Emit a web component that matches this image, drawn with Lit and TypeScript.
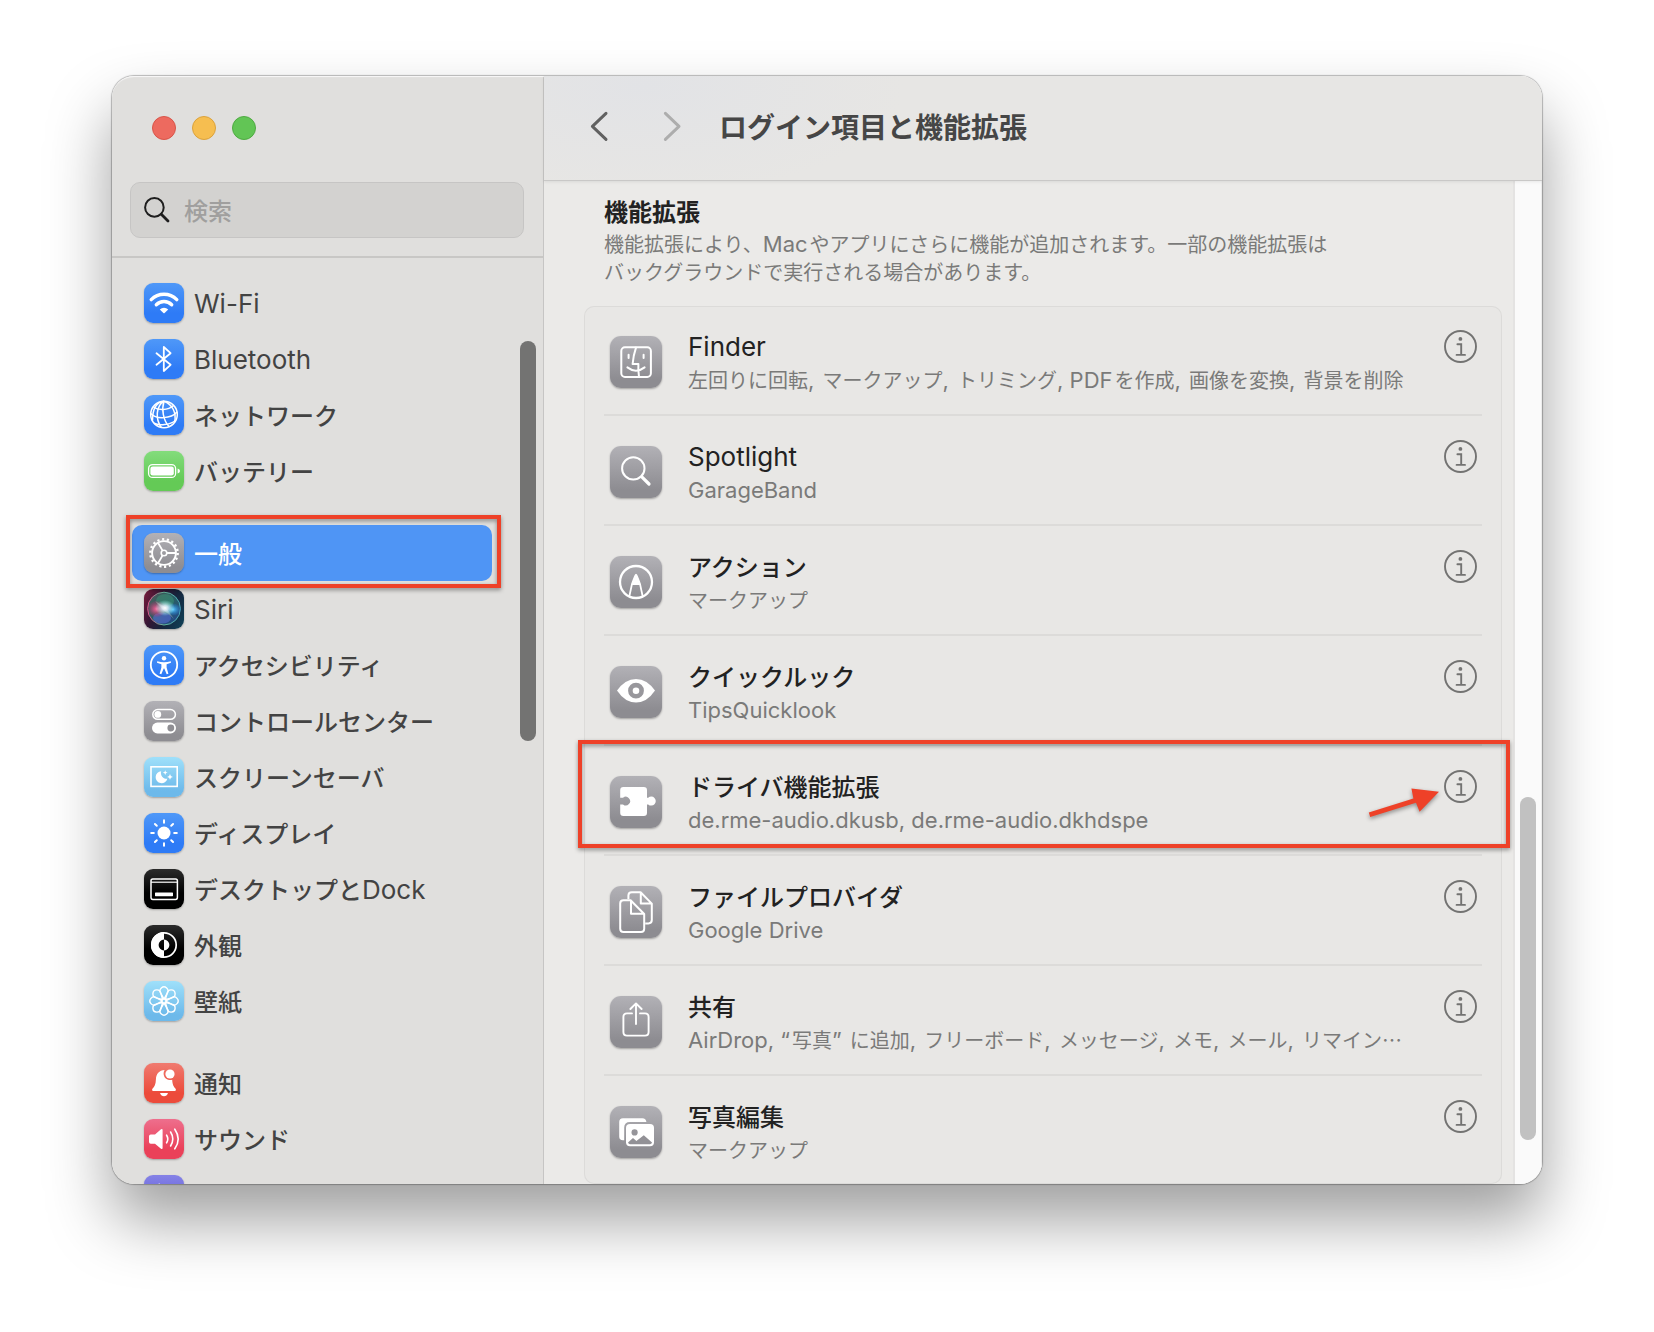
import { LitElement, html, svg, css, type SVGTemplateResult } from "lit";
import { customElement, property, state } from "lit/decorators.js";
import { classMap } from "lit/directives/class-map.js";

const around = (n: number) => Array.from({ length: n }, (_, i) => (i * 360) / n);

/* White glyphs of the sidebar tiles, drawn on a 40 x 40 grid. */
const navGlyphs: Record<string, SVGTemplateResult> = {
  wifi: svg`<g fill="none" stroke="#fff" stroke-width="3.4" stroke-linecap="round">
      <path d="M7.2 16.6A18 18 0 0 1 32.8 16.6"/><path d="M12.3 21.7A11 11 0 0 1 27.7 21.7"/></g>
    <path d="M15.8 26.4A6 6 0 0 1 24.2 26.4L20.6 30Q20 30.6 19.4 30Z" fill="#fff"/>`,
  bluetooth: svg`<path d="M12.5 14.3 26.6 25.8 19.8 32V8l6.8 6.2L12.5 25.7" fill="none" stroke="#fff" stroke-width="1.8" stroke-linejoin="round" stroke-linecap="round"/>`,
  network: svg`<g fill="none" stroke="#fff" stroke-width="1.5">
      <circle cx="20" cy="19.5" r="13.3"/>
      <path d="M20 6.2C12 11 11 24 17.5 32.6M20 6.2C17.5 14 19 25 25 31.6M20 6.2C28 9 33 18 30.5 27M20 6.2C12.5 7 8.5 13 8.5 25.5"/>
      <path d="M9.5 12C14 15.5 24 15.5 29.5 10.5M6.8 18.5C12 24.5 27 24 33 17M10 28.2C15 31 26 30 31.5 25.5"/></g>`,
  battery: svg`<rect x="4.6" y="13.6" width="27" height="12.8" rx="4" fill="none" stroke="#fff" stroke-width="1.3"/>
    <rect x="6.4" y="15.4" width="23.4" height="9.2" rx="2.4" fill="#fff"/>
    <path d="M33.6 17.6Q36 18.4 36 20T33.6 22.4Z" fill="#fff"/>`,
  general: svg`<g fill="none" stroke="#fff"><circle cx="20" cy="20" r="13.7" stroke-width="2.4" stroke-dasharray="2.2 2.582"/>
      <circle cx="20" cy="20" r="11.9" stroke-width="1.9"/><circle cx="20" cy="20" r="2.8" stroke-width="1.6"/>
      <path d="M22.8 20H32M18.6 17.6 14 9.8M18.6 22.4 14 30.2" stroke-width="1.8"/></g>`,
  siri: svg`<defs>
      <radialGradient id="core"><stop offset="0" stop-color="#fff"/><stop offset=".3" stop-color="#e6f4ff" stop-opacity=".85"/><stop offset="1" stop-color="#9fe" stop-opacity="0"/></radialGradient>
      <radialGradient id="rose"><stop offset="0" stop-color="#ff6a9e"/><stop offset="1" stop-color="#d0246a" stop-opacity=".1"/></radialGradient>
      <radialGradient id="aqua"><stop offset="0" stop-color="#5cc8ff"/><stop offset="1" stop-color="#1f86e8" stop-opacity=".1"/></radialGradient>
      <linearGradient id="orb" x1="0" y1="0" x2="1" y2="1"><stop offset="0" stop-color="#4a6a60"/><stop offset=".5" stop-color="#2f6f70"/><stop offset="1" stop-color="#2444a0"/></linearGradient>
      <linearGradient id="rim" x1="0" y1="0" x2="1" y2="0"><stop offset="0" stop-color="#e0548a"/><stop offset=".5" stop-color="#62b89a"/><stop offset="1" stop-color="#4aa6b8"/></linearGradient></defs>
    <circle cx="20" cy="19.6" r="16.4" fill="url(#orb)" opacity=".8"/>
    <circle cx="20" cy="19.6" r="16.4" fill="none" stroke="url(#rim)" stroke-width="1"/>
    <ellipse cx="21" cy="12" rx="9" ry="7" fill="#3fa47c" opacity=".4"/>
    <ellipse cx="18" cy="29" rx="9" ry="5.5" fill="#5b6ee0" opacity=".55"/>
    <ellipse cx="12.5" cy="20" rx="9" ry="8" fill="url(#rose)"/>
    <ellipse cx="29" cy="20.5" rx="8" ry="6" fill="url(#aqua)"/>
    <ellipse cx="21" cy="19" rx="10" ry="8" fill="url(#core)"/>
    <path d="M11 12 22 18.5 30 30 19.5 21Z" fill="#fff" opacity=".25"/>`,
  access: svg`<circle cx="20" cy="19.8" r="13.2" fill="none" stroke="#fff" stroke-width="1.8"/>
    <circle cx="20" cy="13.2" r="2.2" fill="#fff"/>
    <path d="M13.2 16.2Q20 18.2 26.8 16.2L27 17.8 22.6 19.2V22.4L24.4 28.8 22.7 29.2 20.3 23.6H19.7L17.3 29.2 15.6 28.8 17.4 22.4V19.2L13 17.8Z" fill="#fff"/>`,
  control: svg`<rect x="8.8" y="8.5" width="22.6" height="9.8" rx="4.9" fill="none" stroke="#fff" stroke-width="1.5"/>
    <circle cx="13.8" cy="13.4" r="3.4" fill="#fff"/>
    <rect x="8" y="21.6" width="24" height="10.8" rx="5.4" fill="#fff"/><circle cx="26.8" cy="27" r="3.4" fill="#8f8e93"/>`,
  saver: svg`<rect x="7" y="9.8" width="26.2" height="19.6" fill="none" stroke="#fff" stroke-width="1.6"/>
    <path d="M17.2 14.2A6 6 0 1 0 23.4 21.8 5.8 5.8 0 0 1 17.2 14.2Z" fill="#fff"/>
    <path d="M21.2 13.2 21.9 14.9 23.6 15.6 21.9 16.3 21.2 18 20.5 16.3 18.8 15.6 20.5 14.9ZM26 17 26.9 19 28.9 19.9 26.9 20.8 26 22.8 25.1 20.8 23.1 19.9 25.1 19Z" fill="#fff"/>`,
  display: svg`<circle cx="20" cy="20" r="6.5" fill="#fff"/>
    ${around(8).map((a) => svg`<path d="M20 9.8V7.2" transform="rotate(${a} 20 20)" stroke="#fff" stroke-width="2" stroke-linecap="round"/>`)}`,
  dock: svg`<rect x="7" y="10" width="26.4" height="20.4" rx="1.8" fill="none" stroke="#fff" stroke-width="1.5"/>
    <path d="M7 13.2H33.4" stroke="#fff" stroke-width="1.2"/><rect x="11" y="23.4" width="18" height="3.8" rx=".6" fill="#fff"/>`,
  look: svg`<circle cx="20" cy="20" r="12.2" fill="none" stroke="#fff" stroke-width="1.7"/>
    <path d="M20 7A13 13 0 0 0 20 33V25.4A5.4 5.4 0 0 1 20 14.6ZM20 14.6A5.4 5.4 0 0 1 20 25.4Z" fill="#fff"/>`,
  paper: svg`${around(8).map((a) => svg`<path d="M20 18.2 16.7 12.2A4 4 0 1 1 23.3 12.2Z" transform="rotate(${a} 20 20)" fill="none" stroke="#fff" stroke-width="1.4" stroke-linejoin="round"/>`)}
    <circle cx="20" cy="20" r="2.2" fill="none" stroke="#fff" stroke-width="1.2"/>`,
  bell: svg`<path d="M20.6 7A6.6 6.6 0 0 0 25 17 6.6 6.6 0 0 0 28.2 16.8C28.4 21.6 29.6 23.6 31.4 25.4 32.4 26.6 32 28 30.6 28H9.4C8 28 7.6 26.6 8.6 25.4 10.6 23.4 11.8 21 11.9 16.4 12 11 15.2 7.2 20.6 7ZM16 30H24Q22.8 33.2 20 33.2T16 30Z" fill="#fff"/>
    <circle cx="26" cy="11" r="4.6" fill="#fff"/>`,
  sound: svg`<path d="M6.8 15.4H11L17 10.3Q18.6 9.4 18.6 11V29Q18.6 30.6 17 29.7L11 24.8H6.8Q5 24.8 5 23V17.2Q5 15.4 6.8 15.4Z" fill="#fff"/>
    <path d="M22.6 16.2Q25 20 22.6 23.8M26.6 13Q31 20 26.6 27M30.8 10.2Q37.6 20 30.8 29.8" fill="none" stroke="#fff" stroke-width="1.6" stroke-linecap="round"/>`,
  focus: svg`<path d="M15.8 8.2A12 12 0 1 0 31.6 24 12 12 0 0 1 15.8 8.2Z" fill="#fff"/>`,
};

/* White glyphs of the extension tiles, drawn on a 52 x 52 grid. */
const rowGlyphs: Record<string, SVGTemplateResult> = {
  finder: svg`<g fill="none" stroke="#fff" stroke-width="2" stroke-linecap="round" stroke-linejoin="round">
      <rect x="11.3" y="11.3" width="29.6" height="29.6" rx="3.6"/>
      <path d="M26 11.6Q23.4 19 22.6 28H28.4Q28 34 29 40.6M17.4 31.4Q26 38 34.6 31.4"/>
      <path d="M18.6 18.8V22M33.6 18.8V22"/></g>`,
  spotlight: svg`<circle cx="23.3" cy="22.4" r="11.2" fill="none" stroke="#fff" stroke-width="2"/>
    <path d="M31.8 30.8 39 38" stroke="#fff" stroke-width="3.2" stroke-linecap="round"/>`,
  markup: svg`<circle cx="26" cy="26" r="16" fill="none" stroke="#fff" stroke-width="2.3"/>
    <path d="M26 17.6 30.6 29H21.4Z" fill="#fff"/>
    <path d="M26 18.6Q25 19.6 21.9 28.4L19.4 40M26 18.6Q27 19.6 30.1 28.4L32.6 40" fill="none" stroke="#fff" stroke-width="1.8"/>`,
  look: svg`<path d="M7 24.6Q15 12.9 26 12.9T45 24.6Q37 36.6 26 36.6T7 24.6Z" fill="#fff"/>
    <circle cx="26" cy="24.7" r="5.6" fill="none" stroke="#98979c" stroke-width="4.6"/>`,
  driver: svg`<path d="M13.4 11H33.8Q37 11 37 14.2V21.8H38.2A4.5 4.5 0 1 1 38.2 28.4H37V36.8Q37 40 33.8 40H13.4Q10.2 40 10.2 36.8V28.4H13A4.3 4.3 0 1 0 13 21.8H10.2V14.2Q10.2 11 13.4 11Z" fill="#fff"/>`,
  files: svg`<g fill="none" stroke="#fff" stroke-width="2" stroke-linejoin="round">
      <path d="M18.4 13V9.6Q18.4 6.2 21.8 6.2H30.6L41.8 17.6V34Q41.8 37.4 38.4 37.4H35.2M30.8 6.6V17.6H41.4" />
      <path d="M13.6 14.2H20.6L34.2 28V42.8Q34.2 46 31 46H13.6Q10.2 46 10.2 42.8V17.4Q10.2 14.2 13.6 14.2ZM21 14.6V27.8H34"/></g>`,
  share: svg`<g fill="none" stroke="#fff" stroke-width="1.9" stroke-linecap="round" stroke-linejoin="round">
      <path d="M22 17.4H17Q13.4 17.4 13.4 21V36Q13.4 39.6 17 39.6H35Q38.6 39.6 38.6 36V21Q38.6 17.4 35 17.4H30M26 28V7.6M20.4 13 26 7.4 31.6 13"/></g>`,
  photos: svg`<path d="M13 12.2H32.4Q36 12.2 36.4 16H20Q14.2 16 14.2 21.6V34.2H13Q9.2 34.2 9.2 30.4V16Q9.2 12.2 13 12.2Z" fill="#fff"/>
    <rect x="16" y="18" width="28" height="22.2" rx="4" fill="#fff"/>
    <circle cx="24.6" cy="26.4" r="3.1" fill="#96959a"/>
    <path d="M18 36.4 23 32 26.4 35 33.8 29.2 42 36.4V36.8Q41.4 38.2 40 38.2H20Q18.6 38.2 18 36.4Z" fill="#929196"/>`,
};

interface NavItem { icon: string; tone: string; label: string }
interface Extension { icon: string; title: string; detail: string }

const navGroups: NavItem[][] = [
  [
    { icon: "wifi", tone: "blue", label: "Wi-Fi" },
    { icon: "bluetooth", tone: "blue", label: "Bluetooth" },
    { icon: "network", tone: "blue", label: "ネットワーク" },
    { icon: "battery", tone: "green", label: "バッテリー" },
  ],
  [
    { icon: "general", tone: "gray", label: "一般" },
    { icon: "siri", tone: "siri", label: "Siri" },
    { icon: "access", tone: "blue", label: "アクセシビリティ" },
    { icon: "control", tone: "gray", label: "コントロールセンター" },
    { icon: "saver", tone: "sky", label: "スクリーンセーバ" },
    { icon: "display", tone: "blue", label: "ディスプレイ" },
    { icon: "dock", tone: "black", label: "デスクトップとDock" },
    { icon: "look", tone: "black", label: "外観" },
    { icon: "paper", tone: "sky", label: "壁紙" },
  ],
  [
    { icon: "bell", tone: "red", label: "通知" },
    { icon: "sound", tone: "pink", label: "サウンド" },
    { icon: "focus", tone: "indigo", label: "" },
  ],
];

const extensions: Extension[] = [
  { icon: "finder", title: "Finder", detail: "左回りに回転, マークアップ, トリミング, PDFを作成, 画像を変換, 背景を削除" },
  { icon: "spotlight", title: "Spotlight", detail: "GarageBand" },
  { icon: "markup", title: "アクション", detail: "マークアップ" },
  { icon: "look", title: "クイックルック", detail: "TipsQuicklook" },
  { icon: "driver", title: "ドライバ機能拡張", detail: "de.rme-audio.dkusb, de.rme-audio.dkhdspe" },
  { icon: "files", title: "ファイルプロバイダ", detail: "Google Drive" },
  { icon: "share", title: "共有", detail: "AirDrop, “写真” に追加, フリーボード, メッセージ, メモ, メール, リマイン…" },
  { icon: "photos", title: "写真編集", detail: "マークアップ" },
];

/* Latin runs take the Latin face, everything else the Japanese one. */
const mixed = (text: string) =>
  text
    .split(/([A-Za-z.,“”\-][A-Za-z.,“”\- ]*)/)
    .filter((part) => part !== "")
    .map((part) => (/^[A-Za-z.,“”\-]/.test(part) ? html`<span class="latin">${part}</span>` : part));

/* The Latin face is set one step larger than the Japanese text it stands in. */
const latinStyle = css`
  .latin { font-family: Inter, "Liberation Sans", sans-serif; font-weight: 400; line-height: 1; }
  .text-large .latin { font-size: 26px; }
  .text-small .latin { font-size: 22px; margin-right: 2px; }
`;

@customElement("nav-item")
class NavItemElement extends LitElement {
  @property() icon = "";
  @property() tone = "";
  @property() label = "";
  @property({ type: Boolean }) selected = false;

  static styles = [latinStyle, css`
    :host { display: block; }
    .item {
      display: flex; align-items: center; gap: 10px; height: 56px; padding: 0 12px;
      border-radius: 10px; color: #434343; text-decoration: none; white-space: nowrap;
      font-size: 24px; line-height: 32px; font-weight: 500;
    }
    .selected { background: #4f95f5; color: #fff; }
    .tile { flex: none; width: 40px; height: 40px; border-radius: 9px; box-shadow: 0 1px 2px rgba(0, 0, 0, 0.28); }
    .tile svg { display: block; width: 40px; height: 40px; }
    .blue { background: linear-gradient(#4f98f8, #2e7bf6 75%); }
    .green { background: linear-gradient(#83dc7c, #64ca56 75%); }
    .gray { background: linear-gradient(#b2b1b6, #8e8d92 85%); }
    .sky { background: linear-gradient(#9fe0fa, #6db9ea 85%); }
    .black { background: linear-gradient(#2b2b2b, #000 60%); }
    .red { background: linear-gradient(#f07b70, #ec4b3b 75%); }
    .pink { background: linear-gradient(#ee6f8d, #ea4159 75%); }
    .indigo { background: linear-gradient(#8582e6, #5a55d4 90%); }
    .siri { background: linear-gradient(115deg, #7c1c3c, #331634 35%, #16243c 60%, #10445a); }
  `];

  render() {
    return html`
      <a class=${classMap({ item: true, selected: this.selected })} href="#${this.icon}" aria-current=${this.selected ? "page" : "false"}>
        <span class="tile ${this.tone}"><svg viewBox="0 0 40 40" aria-hidden="true">${navGlyphs[this.icon]}</svg></span>
        <span class="text-large">${mixed(this.label)}</span>
      </a>`;
  }
}

@customElement("extension-row")
class ExtensionRow extends LitElement {
  @property() icon = "";
  @property() heading = "";
  @property() detail = "";

  static styles = [latinStyle, css`
    :host { display: block; }
    .row { display: flex; align-items: flex-start; height: 108px; padding: 0 5px 0 6px; }
    .tile {
      flex: none; width: 52px; height: 52px; margin: 30px 26px 0 0; border-radius: 11px;
      background: linear-gradient(#b2b1b6, #8d8c91 85%); box-shadow: 0 1px 2px rgba(0, 0, 0, 0.3);
    }
    .tile svg { display: block; width: 52px; height: 52px; }
    .copy { flex: 1; min-width: 0; padding-top: 22px; white-space: nowrap; }
    .heading { margin: 0; font-size: 24px; line-height: 36px; font-weight: 500; color: #222; }
    .detail { margin: 0; font-size: 20px; line-height: 32px; color: #7a7a79; }
    .info { flex: none; width: 33px; height: 33px; margin-top: 24px; padding: 0; border: 0; background: none; }
    .info svg { display: block; width: 33px; height: 33px; }
  `];

  render() {
    return html`
      <div class="row">
        <span class="tile"><svg viewBox="0 0 52 52" aria-hidden="true">${rowGlyphs[this.icon]}</svg></span>
        <div class="copy">
          <h3 class="heading text-large">${mixed(this.heading)}</h3>
          <p class="detail text-small">${mixed(this.detail)}</p>
        </div>
        <button class="info" type="button" aria-label=${this.heading}>
          <svg viewBox="0 0 33 33" aria-hidden="true">
            <circle cx="16.5" cy="16.5" r="15.5" fill="none" stroke="#737372" stroke-width="1.9"/>
            <circle cx="16.4" cy="8.9" r="1.9" fill="#737372"/>
            <path d="M13.4 14.2H17.2V24.8M12.6 24.9H21" fill="none" stroke="#737372" stroke-width="1.9" stroke-linecap="round"/>
          </svg>
        </button>
      </div>`;
  }
}

@customElement("app-root")
class AppRoot extends LitElement {
  @state() private current = "general";

  static styles = [latinStyle, css`
    :host {
      display: block; box-sizing: border-box; height: 100vh; padding: 76px 112px 148px; overflow: hidden;
      background: #fff; font-family: "Noto Sans CJK JP", Inter, sans-serif;
    }
    .window {
      position: relative; display: flex; height: 100%; border-radius: 22px;
      box-shadow: 0 0 1px 1px rgba(0, 0, 0, 0.26), 0 36px 64px rgba(0, 0, 0, 0.38);
    }
    .panes { display: flex; flex: 1; min-width: 0; border-radius: 22px; overflow: hidden; }
    .gloss {
      position: absolute; inset: 0; border-radius: 22px; pointer-events: none;
      box-shadow: inset 0 2px 1px -1px rgba(255, 255, 255, 0.8);
    }

    .sidebar {
      position: relative; display: flex; flex-direction: column; flex: none; box-sizing: border-box;
      width: 432px; border-right: 1px solid #c6c5c4; background: #e0dfdd;
    }
    .top { padding: 40px 19px 18px 18px; border-bottom: 2px solid #c8c7c5; }
    .lights { display: flex; gap: 16px; padding-left: 22px; }
    .light { box-sizing: border-box; width: 24px; height: 24px; padding: 0; border: 1px solid; border-radius: 50%; }
    .close { background: #ed6a5f; border-color: #d85549; }
    .mini { background: #f6be50; border-color: #dba23c; }
    .zoom { background: #62c555; border-color: #4faa42; }
    .search {
      display: flex; align-items: center; gap: 14px; box-sizing: border-box; height: 56px; margin-top: 42px;
      padding: 0 14px 0 13px; border: 1px solid #c6c5c4; border-radius: 10px; background: #d3d2d0;
    }
    .search svg { flex: none; width: 26px; height: 26px; }
    .field {
      flex: 1; min-width: 0; padding: 0; border: 0; outline: 0; background: none;
      font-family: inherit; font-size: 24px; line-height: 32px; font-weight: 500; color: #222;
    }
    .field::placeholder { color: #a09f9e; opacity: 1; }
    .nav { display: flex; flex-direction: column; gap: 26px; flex: 1; min-height: 0; padding: 17px 51px 0 20px; overflow: hidden; }
    .group { flex: none; }
    .side-thumb { position: absolute; top: 265px; right: 7px; width: 16px; height: 400px; border-radius: 8px; background: #737372; }

    .main { display: flex; flex-direction: column; flex: 1; min-width: 0; background: #ebeae8; }
    .toolbar {
      z-index: 1; display: flex; align-items: center; flex: none; box-sizing: border-box; height: 105px;
      padding: 0 44px 4px; border-bottom: 1px solid #c9c8c7; box-shadow: 0 1px 3px rgba(0, 0, 0, 0.08);
      background: radial-gradient(ellipse 260px 110px at 100px 10px, #e2e3e6, transparent), #e7e6e4;
    }
    .arrow { width: 24px; height: 32px; margin-right: 49px; padding: 0; border: 0; background: none; color: #616161; }
    .arrow:disabled { color: #adadad; }
    .arrow svg { display: block; width: 24px; height: 32px; }
    .next { margin-right: 34px; }
    .title { margin: 0; font-size: 28px; line-height: 40px; font-weight: 700; color: #464646; }
    .body { display: flex; flex: 1; min-height: 0; }
    .scroll { flex: 1; min-width: 0; padding: 11px 11px 0 40px; overflow: hidden; }
    .intro { padding: 0 20px 20px; }
    .section { margin: 0; font-size: 24px; line-height: 38px; font-weight: 700; color: #222; }
    .note { margin: 0; font-size: 20px; line-height: 28px; color: #7a7a79; }
    .card { margin: 0; padding: 0 20px; list-style: none; border-radius: 10px; background: #e8e7e5; box-shadow: inset 0 0 0 1px #dcdbd9; }
    .entry + .entry { border-top: 2px solid #dcdbd9; }
    .track {
      display: flex; flex-direction: column; align-items: center; flex: none; box-sizing: border-box; width: 29px;
      border-left: 2px solid #e4e3e2; border-right: 1px solid #ececec; background: #fafafa;
    }
    .before { flex: 616; }
    .thumb { flex: 343; width: 16px; border-radius: 8px; background: #c1c1c1; }
    .after { flex: 44; }

    .mark { position: absolute; box-sizing: border-box; border: 4px solid #ee4128; pointer-events: none; filter: drop-shadow(0 2px 2px rgba(0, 0, 0, 0.4)); }
    .mark-nav { top: 439px; left: 14px; width: 375px; height: 73px; }
    .mark-row { top: 664px; left: 466px; right: 32px; height: 108px; }
    .pointer { position: absolute; top: 706px; right: 99px; width: 80px; height: 40px; overflow: visible; pointer-events: none; filter: drop-shadow(0 2px 2px rgba(0, 0, 0, 0.4)); }
  `];

  render() {
    return html`
      <div class="window">
        <div class="panes">
          <aside class="sidebar">
            <div class="top">
              <div class="lights">
                <button class="light close" type="button" aria-label="閉じる"></button>
                <button class="light mini" type="button" aria-label="しまう"></button>
                <button class="light zoom" type="button" aria-label="拡大"></button>
              </div>
              <label class="search">
                <svg viewBox="0 0 26 26" aria-hidden="true">
                  <circle cx="10.4" cy="10.4" r="9.3" fill="none" stroke="#1e1e1e" stroke-width="2"/>
                  <path d="M17.3 17.3 24 24" stroke="#1e1e1e" stroke-width="2.8" stroke-linecap="round"/>
                </svg>
                <input class="field" type="text" placeholder="検索" aria-label="検索">
              </label>
            </div>
            <nav class="nav">
              ${navGroups.map((group) => html`
                <div class="group">
                  ${group.map((item) => html`
                    <nav-item .icon=${item.icon} .tone=${item.tone} .label=${item.label}
                      .selected=${item.icon === this.current}
                      @click=${() => (this.current = item.icon)}></nav-item>`)}
                </div>`)}
            </nav>
            <div class="side-thumb"></div>
          </aside>
          <main class="main">
            <header class="toolbar">
              <button class="arrow" type="button" aria-label="戻る">
                <svg viewBox="0 0 24 32" aria-hidden="true"><path d="M18 3.4 4.4 16.4 18 29.4" fill="none" stroke="currentColor" stroke-width="3" stroke-linecap="round" stroke-linejoin="round"/></svg>
              </button>
              <button class="arrow next" type="button" aria-label="進む" disabled>
                <svg viewBox="0 0 24 32" aria-hidden="true"><path d="M4.4 3.4 18 16.4 4.4 29.4" fill="none" stroke="currentColor" stroke-width="3" stroke-linecap="round" stroke-linejoin="round"/></svg>
              </button>
              <h1 class="title">ログイン項目と機能拡張</h1>
            </header>
            <div class="body">
              <section class="scroll">
                <div class="intro">
                  <h2 class="section">機能拡張</h2>
                  <p class="note text-small">${mixed("機能拡張により、Macやアプリにさらに機能が追加されます。一部の機能拡張は")}<br>バックグラウンドで実行される場合があります。</p>
                </div>
                <ul class="card">
                  ${extensions.map((item) => html`
                    <li class="entry"><extension-row .icon=${item.icon} .heading=${item.title} .detail=${item.detail}></extension-row></li>`)}
                </ul>
              </section>
              <div class="track"><div class="before"></div><div class="thumb"></div><div class="after"></div></div>
            </div>
          </main>
        </div>
        <div class="gloss"></div>
        <div class="mark mark-nav"></div>
        <div class="mark mark-row"></div>
        <svg class="pointer" viewBox="0 0 80 40" aria-hidden="true">
          <path d="M5.8 30.6 50.4 16.6 48.4 6.4 76 9.8 56.6 29.8 53 20.8 7.2 35Z" fill="#ee4128"/>
        </svg>
      </div>`;
  }
}
